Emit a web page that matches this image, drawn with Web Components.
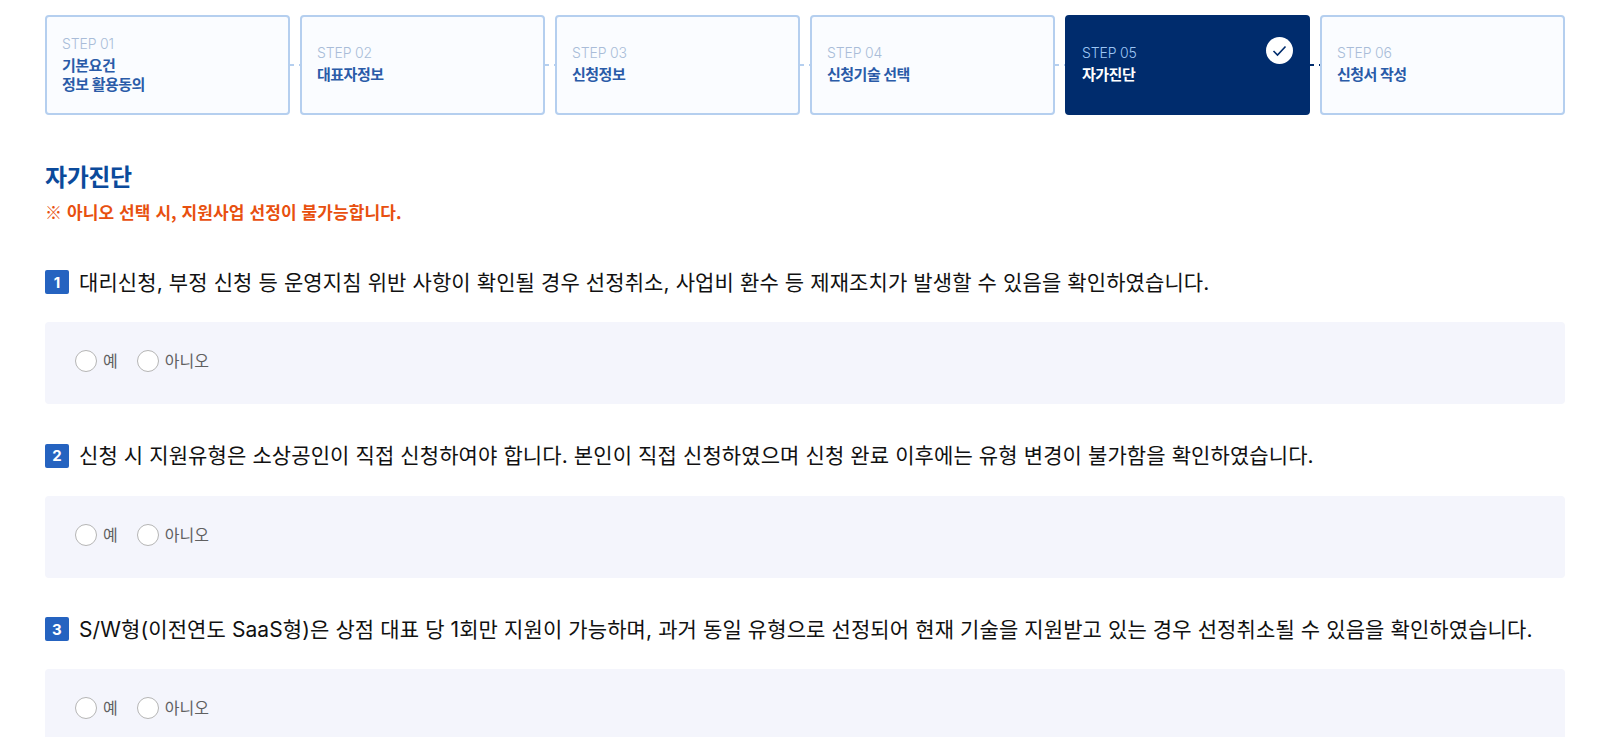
<!DOCTYPE html>
<html lang="ko">
<head>
<meta charset="utf-8">
<title>자가진단</title>
<style>
  html, body { margin: 0; height: 737px; overflow: hidden; background: #fff; }
  body { font-family: Inter, "Noto Sans CJK KR", sans-serif; }
  #page { box-sizing: border-box; width: 1603px; height: 737px; overflow: hidden; padding: 15px 38px 0 45px; }
</style>
</head>
<body>
<div id="page">
  <step-list>
    <step-card step="01">기본요건<br>정보 활용동의</step-card>
    <step-card step="02">대표자정보</step-card>
    <step-card step="03">신청정보</step-card>
    <step-card step="04">신청기술 선택</step-card>
    <step-card step="05" active>자가진단</step-card>
    <step-card step="06" last>신청서 작성</step-card>
  </step-list>
  <section-head note="※ 아니오 선택 시, 지원사업 선정이 불가능합니다.">자가진단</section-head>
  <check-question num="1" name="q1">대리신청, 부정 신청 등 운영지침 위반 사항이 확인될 경우 선정취소, 사업비 환수 등 제재조치가 발생할 수 있음을 확인하였습니다.</check-question>
  <check-question num="2" name="q2">신청 시 지원유형은 소상공인이 직접 신청하여야 합니다. 본인이 직접 신청하였으며 신청 완료 이후에는 유형 변경이 불가함을 확인하였습니다.</check-question>
  <check-question num="3" name="q3">S/W형(이전연도 SaaS형)은 상점 대표 당 1회만 지원이 가능하며, 과거 동일 유형으로 선정되어 현재 기술을 지원받고 있는 경우 선정취소될 수 있음을 확인하였습니다.</check-question>
</div>

<script>
class StepList extends HTMLElement {
  constructor() {
    super();
    this.attachShadow({mode: 'open'});
    this.shadowRoot.innerHTML = `
      <style>
        :host { display: grid; grid-template-columns: repeat(6, 245px); gap: 10px; }
      </style>
      <slot></slot>`;
  }
}
customElements.define('step-list', StepList);

class StepCard extends HTMLElement {
  constructor() {
    super();
    this.attachShadow({mode: 'open'});
    this.shadowRoot.innerHTML = `
      <style>
        :host {
          display: flex; flex-direction: column; justify-content: center;
          position: relative; box-sizing: border-box; height: 100px;
          padding: 0 15px 3px; background: #fafcff;
          border: 2px solid #b5cfef; border-radius: 4px;
        }
        :host([active]) { background: #002c6d; border-color: #002c6d; }
        .num { font-size: 14px; line-height: 20px; font-weight: 300; color: #a9bcd8; letter-spacing: -0.15px; }
        .name { font-size: 15px; line-height: 19px; font-weight: 700; color: #2a5ba8; margin-top: 2px; letter-spacing: -0.5px; }
        :host([active]) .num { color: #9cc6f5; }
        :host([active]) .name { color: #fff; }
        /* connector sits over the gap between two cards */
        .line { position: absolute; left: 100%; top: 50%; width: 10px; margin: -1px 0 0 2px; height: 1.5px;
          background: linear-gradient(90deg, #b5cfef 0 4px, transparent 4px 9px, #b5cfef 9px 10px); }
        :host([active]) .line { background: linear-gradient(90deg, #002c6d 0 4px, transparent 4px 9px, #002c6d 9px 10px); }
        :host([last]) .line { display: none; }
        .check { display: none; position: absolute; right: 15px; top: 20px; width: 27px; height: 27px; }
        :host([active]) .check { display: block; }
      </style>
      <div class="num"></div>
      <div class="name"><slot></slot></div>
      <div class="line"></div>
      <svg class="check" viewBox="0 0 27 27">
        <circle cx="13.5" cy="13.5" r="13.5" fill="#fff"/>
        <path d="M7.5 14l4 4 8-8.5" fill="none" stroke="#002c6d" stroke-width="1.6"/>
      </svg>`;
  }
  connectedCallback() {
    this.shadowRoot.querySelector('.num').textContent = 'STEP ' + this.getAttribute('step');
  }
}
customElements.define('step-card', StepCard);

class SectionHead extends HTMLElement {
  constructor() {
    super();
    this.attachShadow({mode: 'open'});
    this.shadowRoot.innerHTML = `
      <style>
        :host { display: block; padding-top: 46px; margin-bottom: 44px; }
        h2 { margin: 0; font-size: 24px; line-height: 34px; font-weight: 700; color: #0b4a9b; letter-spacing: -0.4px; }
        p { margin: 6px 0 0; font-family: "Noto Sans CJK KR", sans-serif; font-size: 17px; line-height: 22px; font-weight: 700; color: #e8500f; letter-spacing: 0.1px; }
      </style>
      <h2><slot></slot></h2>
      <p></p>`;
  }
  connectedCallback() {
    this.shadowRoot.querySelector('p').textContent = this.getAttribute('note');
  }
}
customElements.define('section-head', SectionHead);

class RadioOption extends HTMLElement {
  constructor() {
    super();
    this.attachShadow({mode: 'open'});
    this.shadowRoot.innerHTML = `
      <style>
        :host { display: inline-flex; align-items: center; gap: 6px; font-size: 16px; line-height: 22px; color: #606060; }
        i { box-sizing: border-box; width: 22px; height: 22px; border: 1px solid #b5b5b5; border-radius: 50%; background: #fff; }
      </style>
      <i></i><slot></slot>`;
  }
}
customElements.define('radio-option', RadioOption);

class CheckQuestion extends HTMLElement {
  constructor() {
    super();
    this.attachShadow({mode: 'open'});
    this.shadowRoot.innerHTML = `
      <style>
        :host { display: block; margin-bottom: 36.5px; }
        .q { display: flex; align-items: center; gap: 10px; height: 30px; font-size: 21px; color: #111; letter-spacing: 0.1px; white-space: nowrap; }
        .t { padding-bottom: 3px; }
        .n { width: 24px; height: 24px; border-radius: 2px; background: #2563c0; color: #fff; font-size: 15px; font-weight: 700;
          display: flex; align-items: center; justify-content: center; }
        .box { display: flex; gap: 19px; align-items: center; box-sizing: border-box; height: 82px; margin-top: 25px;
          padding: 0 0 4px 30px; background: #f4f5fc; border-radius: 4px; }
      </style>
      <div class="q"><span class="n"></span><span class="t"><slot></slot></span></div>
      <div class="box">
        <radio-option>예</radio-option>
        <radio-option>아니오</radio-option>
      </div>`;
  }
  connectedCallback() {
    this.shadowRoot.querySelector('.n').textContent = this.getAttribute('num');
  }
}
customElements.define('check-question', CheckQuestion);
</script>
</body>
</html>
